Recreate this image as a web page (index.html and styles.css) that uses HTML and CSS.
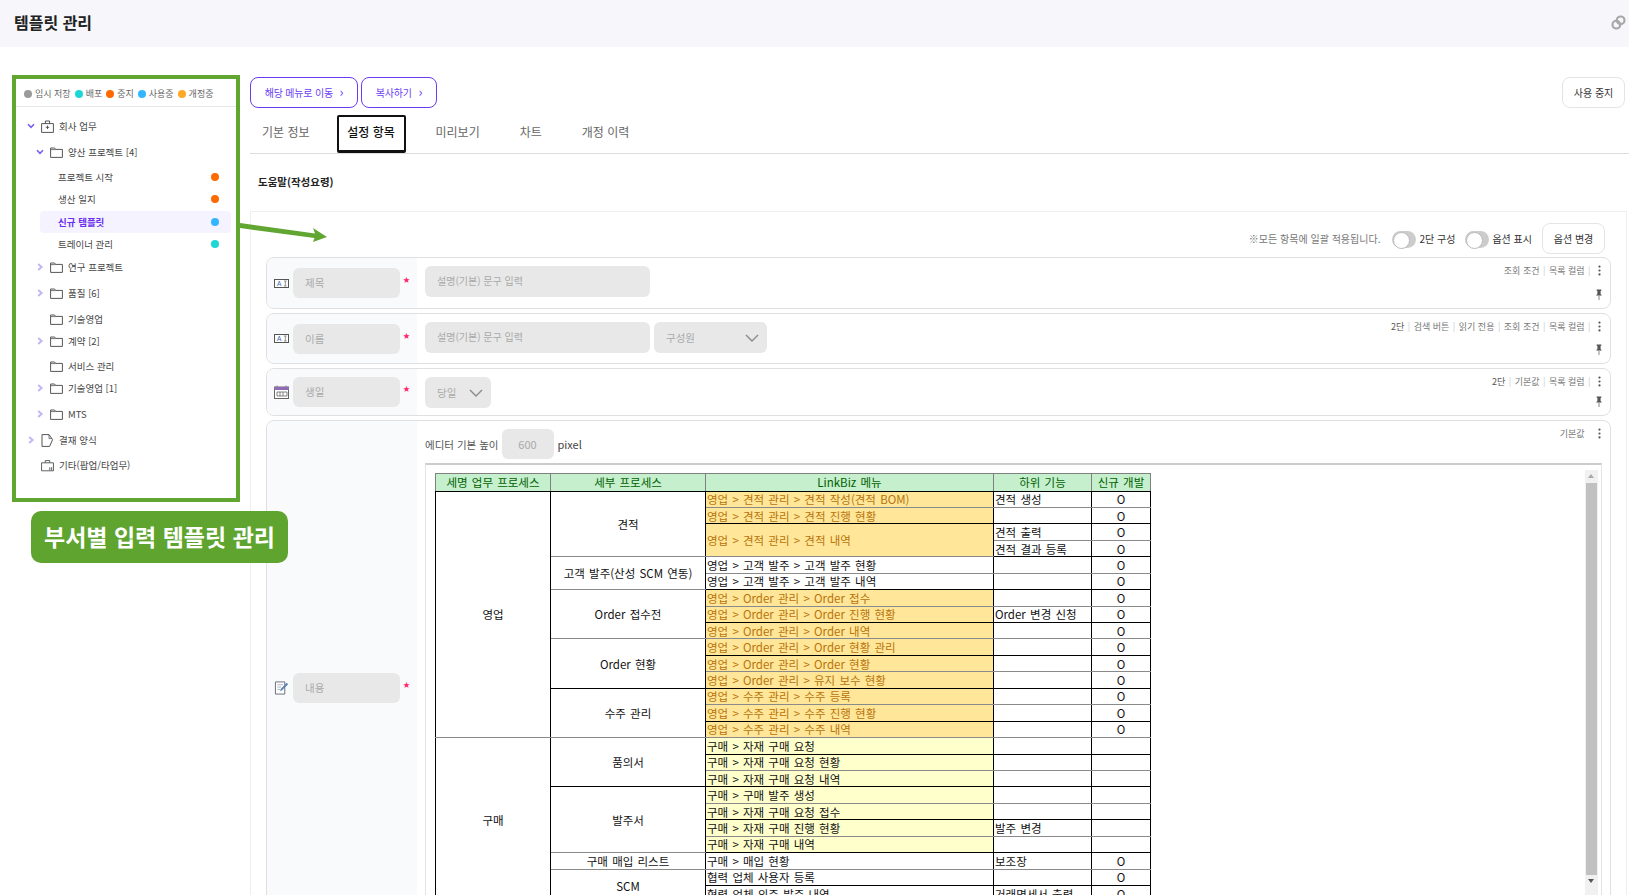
FILE: index.html
```html
<!DOCTYPE html>
<html lang="ko">
<head>
    <meta charset="UTF-8">
    <title>템플릿 관리</title>
    <link rel="stylesheet" href="styles.css">
</head>
<body>
    <!-- 아이콘 모음 -->
    <svg class="sprite" aria-hidden="true">
        <symbol id="i-open" viewBox="0 0 8 8"><path d="M1 2.2 4 5.4 7 2.2" fill="none" stroke="#7c5cf0" stroke-width="1.6"/></symbol>
        <symbol id="i-closed" viewBox="0 0 8 8"><path d="M2.2 1 5.6 4 2.2 7" fill="none" stroke="#c4b5f5" stroke-width="2"/></symbol>
        <symbol id="i-folder" viewBox="0 0 13 11"><path d="M.6 10.4V1h4l1 1.4h6.8v8z" fill="none" stroke="#555" stroke-width="1"/><path d="M.6 2.6h5" stroke="#555" stroke-width=".8"/></symbol>
        <symbol id="i-case" viewBox="0 0 13 13"><path d="M.6 3.6h11.8v8.8H.6zM4.4 3.6V1h4.2v2.6" fill="none" stroke="#555" stroke-width="1"/><path d="M6.5 5.6v3.4M4.8 7.3h3.4" stroke="#555" stroke-width="1"/></symbol>
        <symbol id="i-doc" viewBox="0 0 13 13"><path d="M1 12.4V.6h7l3.6 5-3 6.8z" fill="none" stroke="#555" stroke-width="1"/><path d="M8 .6v4h3" fill="none" stroke="#555" stroke-width=".8"/></symbol>
        <symbol id="i-etc" viewBox="0 0 14 13"><path d="M.6 3.6h12.8v8.6H.6zM4.6 3.6V1.2h4.8v2.4" fill="none" stroke="#555" stroke-width="1"/><path d="M9 8.5h1v3H9zM11 8.5h1v3h-1z" fill="#555"/></symbol>
        <symbol id="i-card" viewBox="0 0 15 9"><rect x=".5" y=".5" width="14" height="8" fill="#fff" stroke="#555"/><text x="3" y="7" font-size="6.5" font-family="Liberation Sans" fill="#3d5fa8">A</text><path d="M10 2h2.6M11.3 2v5M10 7h2.6" stroke="#777" stroke-width=".8"/></symbol>
        <symbol id="i-cal" viewBox="0 0 15 14"><rect x=".5" y="2" width="14" height="11.5" fill="#fff" stroke="#666"/><path d="M0 2h15v3H0z" fill="#8e6bb5"/><path d="M3 .5v2M12 .5v2" stroke="#8e6bb5"/><path d="M3 7h10v4H3zM6 7v4M9 7v4" fill="none" stroke="#666" stroke-width=".8"/></symbol>
        <symbol id="i-note" viewBox="0 0 15 15"><path d="M1 1h10v13H1z" fill="#fff" stroke="#667"/><path d="M3 4h6M3 6.5h4M3 9h3" stroke="#99a" stroke-width=".8"/><path d="M6 11l.6-2.4L13 2l1.6 1.6L8.2 10z" fill="#5b83b5"/></symbol>
        <symbol id="i-pin" viewBox="0 0 8 11"><path d="M1.6 .5h4.8v1L5.6 2v3l1.4 1.6H1L2.4 5V2L1.6 1.5z" fill="#555"/><path d="M4 6.6V11" stroke="#888"/></symbol>
        <symbol id="i-more" viewBox="0 0 3 11"><circle cx="1.5" cy="1.6" r="1.1" fill="#555"/><circle cx="1.5" cy="5.5" r="1.1" fill="#555"/><circle cx="1.5" cy="9.4" r="1.1" fill="#555"/></symbol>
        <symbol id="i-down" viewBox="0 0 14 8"><path d="M1 1l6 6 6-6" fill="none" stroke="#8a8a8a" stroke-width="1.4"/></symbol>
    </svg>

    <header class="top-bar">
        <h1>템플릿 관리</h1>
        <svg class="link-icon" viewBox="0 0 14 14"><g fill="none" stroke="#a8a8a8" stroke-width="2"><circle cx="5" cy="9" r="3.6"/><circle cx="9" cy="5" r="3.6"/></g></svg>
    </header>

    <div class="page-body">
        <!-- 왼쪽 트리 -->
        <aside class="side">
            <div class="legend">
                <span class="legend-item"><i class="dot gray"></i>임시 저장</span>
                <span class="legend-item"><i class="dot teal"></i>배포</span>
                <span class="legend-item"><i class="dot orange"></i>중지</span>
                <span class="legend-item"><i class="dot blue"></i>사용중</span>
                <span class="legend-item"><i class="dot amber"></i>개정중</span>
            </div>
            <ul class="tree">
                <li class="tree-row"><svg class="chev"><use href="#i-open"/></svg><svg class="ico"><use href="#i-case"/></svg>회사 업무</li>
                <li class="tree-row depth1 gap4"><svg class="chev"><use href="#i-open"/></svg><svg class="ico"><use href="#i-folder"/></svg>양산 프로젝트 [4]</li>
                <li class="tree-leaf gap3">프로젝트 시작<i class="dot orange"></i></li>
                <li class="tree-leaf">생산 일지<i class="dot orange"></i></li>
                <li class="tree-leaf active gap1">신규 템플릿<i class="dot blue"></i></li>
                <li class="tree-leaf">트레이너 관리<i class="dot teal"></i></li>
                <li class="tree-row depth1 gap1"><svg class="chev"><use href="#i-closed"/></svg><svg class="ico"><use href="#i-folder"/></svg>연구 프로젝트</li>
                <li class="tree-row depth1 gap4"><svg class="chev"><use href="#i-closed"/></svg><svg class="ico"><use href="#i-folder"/></svg>품질 [6]</li>
                <li class="tree-row depth1 gap4"><span class="chev"></span><svg class="ico"><use href="#i-folder"/></svg>기술영업</li>
                <li class="tree-row depth1"><svg class="chev"><use href="#i-closed"/></svg><svg class="ico"><use href="#i-folder"/></svg>계약 [2]</li>
                <li class="tree-row depth1 gap3"><span class="chev"></span><svg class="ico"><use href="#i-folder"/></svg>서비스 관리</li>
                <li class="tree-row depth1"><svg class="chev"><use href="#i-closed"/></svg><svg class="ico"><use href="#i-folder"/></svg>기술영업 [1]</li>
                <li class="tree-row depth1 gap4"><svg class="chev"><use href="#i-closed"/></svg><svg class="ico"><use href="#i-folder"/></svg>MTS</li>
                <li class="tree-row gap4"><svg class="chev"><use href="#i-closed"/></svg><svg class="ico"><use href="#i-doc"/></svg>결재 양식</li>
                <li class="tree-row gap3"><span class="chev"></span><svg class="ico"><use href="#i-etc"/></svg>기타(팝업/타업무)</li>
            </ul>
        </aside>

        <main class="main">
            <div class="actions">
                <div class="actions-left">
                    <button class="btn-link wide">해당 메뉴로 이동 <span class="gt">›</span></button>
                    <button class="btn-link">복사하기 <span class="gt">›</span></button>
                </div>
                <button class="btn-plain">사용 중지</button>
            </div>

            <nav class="tabs">
                <a class="tab t1">기본 정보</a>
                <a class="tab on">설정 항목</a>
                <a class="tab t3">미리보기</a>
                <a class="tab t4">차트</a>
                <a class="tab t5">개정 이력</a>
            </nav>

            <h2 class="sub-title">도움말(작성요령)</h2>

            <section class="panel">
                <div class="options">
                    <span class="notice">※모든 항목에 일괄 적용됩니다.</span>
                    <span class="toggle"></span><span class="toggle-text">2단 구성</span>
                    <span class="toggle"></span><span class="toggle-text">옵션 표시</span>
                    <button class="btn-plain">옵션 변경</button>
                </div>

                <div class="field h52">
                    <div class="field-left">
                        <svg class="field-ico short"><use href="#i-card"/></svg>
                        <span class="label-box">제목</span><span class="star">★</span>
                    </div>
                    <div class="field-body"><span class="input-box desc">설명(기본) 문구 입력</span></div>
                    <div class="field-meta">
                        <div class="meta-top"><span>조회 조건</span><b>|</b><span>목록 컬럼</span><b>|</b><svg class="more"><use href="#i-more"/></svg></div>
                        <svg class="pin"><use href="#i-pin"/></svg>
                    </div>
                </div>

                <div class="field h51">
                    <div class="field-left">
                        <svg class="field-ico short"><use href="#i-card"/></svg>
                        <span class="label-box">이름</span><span class="star">★</span>
                    </div>
                    <div class="field-body">
                        <span class="input-box desc">설명(기본) 문구 입력</span>
                        <span class="input-box select wide">구성원<svg class="down"><use href="#i-down"/></svg></span>
                    </div>
                    <div class="field-meta">
                        <div class="meta-top"><span class="dark">2단</span><b>|</b><span>검색 버튼</span><b>|</b><span>읽기 전용</span><b>|</b><span>조회 조건</span><b>|</b><span>목록 컬럼</span><b>|</b><svg class="more"><use href="#i-more"/></svg></div>
                        <svg class="pin"><use href="#i-pin"/></svg>
                    </div>
                </div>

                <div class="field h48">
                    <div class="field-left">
                        <svg class="field-ico"><use href="#i-cal"/></svg>
                        <span class="label-box">생일</span><span class="star">★</span>
                    </div>
                    <div class="field-body"><span class="input-box select">당일<svg class="down"><use href="#i-down"/></svg></span></div>
                    <div class="field-meta">
                        <div class="meta-top"><span class="dark">2단</span><b>|</b><span>기본값</span><b>|</b><span>목록 컬럼</span><b>|</b><svg class="more"><use href="#i-more"/></svg></div>
                        <svg class="pin"><use href="#i-pin"/></svg>
                    </div>
                </div>

                <div class="field h536">
                    <div class="field-left">
                        <svg class="field-ico"><use href="#i-note"/></svg>
                        <span class="label-box">내용</span><span class="star">★</span>
                    </div>
                    <div class="field-body column">
                        <div class="editor-height">
                            <span>에디터 기본 높이</span>
                            <span class="input-box num">600</span>
                            <span class="px">pixel</span>
                        </div>
                        <div class="editor">
                            <div class="editor-scroll">
                                <table class="sheet">
                                    <colgroup><col class="c1"><col class="c2"><col class="c3"><col class="c4"><col class="c5"></colgroup>
                                    <thead>
                                        <tr><th>세명 업무 프로세스</th><th>세부 프로세스</th><th>LinkBiz 메뉴</th><th>하위 기능</th><th>신규 개발</th></tr>
                                    </thead>
                                    <tbody>
                                        <tr><td class="mid" rowspan="15">영업</td><td class="mid" rowspan="4">견적</td><td class="sale">영업 &gt; 견적 관리 &gt; 견적 작성(견적 BOM)</td><td>견적 생성</td><td class="mid">O</td></tr>
                                        <tr><td class="sale">영업 &gt; 견적 관리 &gt; 견적 진행 현황</td><td></td><td class="mid">O</td></tr>
                                        <tr><td class="sale" rowspan="2">영업 &gt; 견적 관리 &gt; 견적 내역</td><td>견적 출력</td><td class="mid">O</td></tr>
                                        <tr><td>견적 결과 등록</td><td class="mid">O</td></tr>
                                        <tr><td class="mid" rowspan="2">고객 발주(산성 SCM 연동)</td><td>영업 &gt; 고객 발주 &gt; 고객 발주 현황</td><td></td><td class="mid">O</td></tr>
                                        <tr><td>영업 &gt; 고객 발주 &gt; 고객 발주 내역</td><td></td><td class="mid">O</td></tr>
                                        <tr><td class="mid" rowspan="3">Order 접수전</td><td class="sale">영업 &gt; Order 관리 &gt; Order 접수</td><td></td><td class="mid">O</td></tr>
                                        <tr><td class="sale">영업 &gt; Order 관리 &gt; Order 진행 현황</td><td>Order 변경 신청</td><td class="mid">O</td></tr>
                                        <tr><td class="sale">영업 &gt; Order 관리 &gt; Order 내역</td><td></td><td class="mid">O</td></tr>
                                        <tr><td class="mid" rowspan="3">Order 현황</td><td class="sale">영업 &gt; Order 관리 &gt; Order 현황 관리</td><td></td><td class="mid">O</td></tr>
                                        <tr><td class="sale">영업 &gt; Order 관리 &gt; Order 현황</td><td></td><td class="mid">O</td></tr>
                                        <tr><td class="sale">영업 &gt; Order 관리 &gt; 유지 보수 현황</td><td></td><td class="mid">O</td></tr>
                                        <tr><td class="mid" rowspan="3">수주 관리</td><td class="sale">영업 &gt; 수주 관리 &gt; 수주 등록</td><td></td><td class="mid">O</td></tr>
                                        <tr><td class="sale">영업 &gt; 수주 관리 &gt; 수주 진행 현황</td><td></td><td class="mid">O</td></tr>
                                        <tr><td class="sale">영업 &gt; 수주 관리 &gt; 수주 내역</td><td></td><td class="mid">O</td></tr>
                                        <tr><td class="mid" rowspan="10">구매</td><td class="mid" rowspan="3">품의서</td><td class="buy">구매 &gt; 자재 구매 요청</td><td></td><td></td></tr>
                                        <tr><td class="buy">구매 &gt; 자재 구매 요청 현황</td><td></td><td></td></tr>
                                        <tr><td class="buy">구매 &gt; 자재 구매 요청 내역</td><td></td><td></td></tr>
                                        <tr><td class="mid" rowspan="4">발주서</td><td class="buy">구매 &gt; 구매 발주 생성</td><td></td><td></td></tr>
                                        <tr><td class="buy">구매 &gt; 자재 구매 요청 접수</td><td></td><td></td></tr>
                                        <tr><td class="buy">구매 &gt; 자재 구매 진행 현황</td><td>발주 변경</td><td></td></tr>
                                        <tr><td class="buy">구매 &gt; 자재 구매 내역</td><td></td><td></td></tr>
                                        <tr><td class="mid">구매 매입 리스트</td><td>구매 &gt; 매입 현황</td><td>보조장</td><td class="mid">O</td></tr>
                                        <tr><td class="mid" rowspan="2">SCM</td><td>협력 업체 사용자 등록</td><td></td><td class="mid">O</td></tr>
                                        <tr><td>협력 업체 외주 발주 내역</td><td>거래명세서 출력</td><td class="mid">O</td></tr>
                                    </tbody>
                                </table>
                            </div>
                            <div class="scrollbar">
                                <span class="arrow up"></span>
                                <span class="thumb"></span>
                                <span class="arrow dn"></span>
                            </div>
                        </div>
                    </div>
                    <div class="field-meta">
                        <div class="meta-top"><span>기본값</span><b class="blank">|</b><svg class="more"><use href="#i-more"/></svg></div>
                    </div>
                </div>
            </section>
        </main>
    </div>

    <!-- 설명용 표시 -->
    <svg class="callout-arrow" viewBox="0 0 90 24"><path d="M0 2 75 12.5 73 7 87 16 73 21 74.5 17 0 7z" fill="#62a632"/></svg>
    <div class="callout">부서별 입력 템플릿 관리</div>
</body>
</html>
```

FILE: styles.css
```css
* {
    margin: 0;
    padding: 0;
    box-sizing: border-box;
}

html, body {
    height: 100%;
    overflow: hidden;
}

body {
    font-family: "Noto Sans CJK KR", "Noto Sans", sans-serif;
    font-size: 10px;
    color: #444;
    background: #fff;
    display: flex;
    flex-direction: column;
    position: relative;
}

.sprite {
    display: none;
}

/* 상단 */
.top-bar {
    height: 47px;
    flex: none;
    background: #f6f6fb;
    display: flex;
    align-items: center;
    justify-content: space-between;
    padding: 0 3px 3px 14px;
}

.top-bar h1 {
    font-size: 16px;
    font-weight: 700;
    color: #222;
}

.link-icon {
    width: 15px;
    height: 15px;
}

.page-body {
    flex: 1;
    min-height: 0;
    display: flex;
}

/* 왼쪽 트리 */
.side {
    flex: none;
    width: 228px;
    height: 427px;
    margin: 28px 10px 0 12px;
    border: 4px solid #62a632;
    background: #fff;
}

.legend {
    height: 28px;
    border-bottom: 1px solid #e8e8e8;
    display: flex;
    align-items: center;
    gap: 4px;
    padding: 2px 0 0 8px;
    font-size: 9px;
    color: #666;
}

.legend-item {
    display: flex;
    align-items: center;
    gap: 3px;
}

.dot {
    display: block;
    width: 8px;
    height: 8px;
    border-radius: 50%;
    flex: none;
}

.gray { background: #9a9a9a; }
.teal { background: #1fd6d6; }
.orange { background: #ff6a00; }
.blue { background: #33b5ff; }
.amber { background: #ffa726; }

.tree {
    list-style: none;
    padding-top: 8px;
    font-size: 9.5px;
    color: #444;
}

.tree-row {
    height: 22px;
    display: flex;
    align-items: center;
    padding-left: 11px;
}

.tree-row.depth1 {
    padding-left: 20px;
}

.chev {
    display: block;
    flex: none;
    width: 8px;
    height: 8px;
    margin-right: 6px;
}

.ico {
    flex: none;
    width: 13px;
    height: 13px;
    margin-right: 5px;
}

.tree-leaf {
    height: 22px;
    margin: 0 5px 0 24px;
    padding: 0 12px 0 18px;
    display: flex;
    align-items: center;
    justify-content: space-between;
    border-radius: 4px;
}

.tree-leaf.active {
    background: #f5f3ff;
    color: #6b2ff0;
    font-weight: 700;
}

.gap1 { margin-top: 1px; }
.gap3 { margin-top: 3px; }
.gap4 { margin-top: 4px; }

/* 본문 */
.main {
    flex: 1;
    min-width: 0;
    display: flex;
    flex-direction: column;
}

.actions {
    flex: none;
    margin-top: 30px;
    padding-right: 4px;
    display: flex;
    justify-content: space-between;
}

.actions-left {
    display: flex;
    gap: 3px;
}

button {
    font-family: inherit;
    font-size: 10px;
    background: #fff;
    cursor: pointer;
}

.btn-link {
    width: 76px;
    height: 31px;
    border: 1px solid #6d3cf0;
    border-radius: 8px;
    color: #6b3df5;
    letter-spacing: -0.2px;
}

.btn-link.wide {
    width: 108px;
}

.gt {
    margin-left: 4px;
    font-size: 13px;
    line-height: 1;
}

.btn-plain {
    width: 63px;
    height: 31px;
    border: 1px solid #e4e4e4;
    border-radius: 8px;
    color: #333;
}

.tabs {
    flex: none;
    margin-top: 7px;
    height: 39px;
    border-bottom: 1px solid #ddd;
    display: flex;
    align-items: flex-start;
}

.tab {
    height: 38px;
    font-size: 12px;
    line-height: 34px;
    color: #666;
}

.tab.t1 { margin: 0 27px 0 12px; }
.tab.t3 { margin: 0 40px 0 30px; }
.tab.t4 { margin-right: 40px; }

.tab.on {
    width: 69px;
    text-align: center;
    border: 2px solid #111;
    border-bottom-width: 3px;
    border-radius: 2px;
    line-height: 30px;
    color: #111;
    font-weight: 500;
}

.sub-title {
    flex: none;
    height: 57px;
    padding-left: 8px;
    font-size: 10.5px;
    font-weight: 700;
    line-height: 56px;
    color: #222;
}

.panel {
    flex: 1;
    min-height: 0;
    margin-right: 2px;
    padding: 0 15px;
    border: 1px solid #eee;
    border-bottom: 0;
}

.options {
    height: 45px;
    padding: 11px 6px 0 0;
    display: flex;
    justify-content: flex-end;
    align-items: flex-start;
    line-height: 31px;
    font-size: 10.5px;
}

.notice {
    margin-right: 12px;
    font-size: 10px;
    color: #777;
}

.toggle {
    width: 24px;
    height: 17px;
    margin: 8px 3px 0 0;
    border-radius: 9px;
    background: #ccc;
    position: relative;
}

.toggle::after {
    content: "";
    position: absolute;
    left: 1px;
    top: 1px;
    width: 15px;
    height: 15px;
    border-radius: 50%;
    background: #fff;
    border: 1px solid #bbb;
}

.toggle-text {
    margin-right: 10px;
    font-size: 10px;
    color: #333;
}

/* 항목 */
.field {
    display: flex;
    border: 1px solid #e0e0e0;
    border-radius: 8px;
    margin-bottom: 4px;
    overflow: hidden;
}

.h52 { height: 52px; }
.h51 { height: 51px; }
.h48 { height: 48px; }
.h536 { height: 536px; }

.field-left {
    flex: none;
    width: 150px;
    background: #f9fafc;
    display: flex;
    align-items: center;
    padding-left: 7px;
}

.field-ico {
    flex: none;
    width: 15px;
    height: 14px;
    margin-right: 4px;
}

.field-ico.short {
    height: 9px;
}

.label-box {
    width: 107px;
    height: 30px;
    line-height: 30px;
    padding-left: 12px;
    flex: none;
    background: #e8e8e8;
    border-radius: 6px;
    font-size: 10.5px;
    color: #aaa;
}

.star {
    margin: -8px 0 0 3px;
    font-size: 7px;
    color: #ff1f6b;
}

.field-body {
    flex: 1;
    min-width: 0;
    display: flex;
    gap: 4px;
    padding: 8px 0 0 8px;
}

.field-body.column {
    flex-direction: column;
    gap: 4px;
    padding-right: 8px;
}

.input-box {
    height: 31px;
    line-height: 30px;
    background: #e8e8e8;
    border-radius: 6px;
    color: #aaa;
    font-size: 10px;
    padding-left: 12px;
}

.desc {
    width: 225px;
}

.select {
    width: 66px;
    font-size: 10.5px;
    display: flex;
    align-items: center;
    justify-content: space-between;
    padding-right: 8px;
}

.select.wide {
    width: 113px;
}

.down {
    width: 14px;
    height: 8px;
}

.field-meta {
    flex: none;
    width: 280px;
    margin-left: -280px;
    padding: 5px 9px 8px 0;
    display: flex;
    flex-direction: column;
    align-items: flex-end;
    justify-content: space-between;
    font-size: 9px;
    color: #777;
}

.h536 .field-body {
    padding-right: 8px;
}

.meta-top {
    display: flex;
    align-items: center;
    gap: 3.5px;
    height: 14px;
}

.meta-top .dark {
    color: #555;
}

.meta-top b {
    font-weight: 400;
    color: #ccc;
}

.meta-top b.blank {
    visibility: hidden;
}

.more {
    width: 3px;
    height: 11px;
    margin-left: 4px;
}

.pin {
    width: 8px;
    height: 11px;
    margin-right: -2px;
}

.editor-height {
    display: flex;
    align-items: center;
    gap: 3px;
    font-size: 10.5px;
    color: #555;
}

.num {
    width: 52px;
    height: 30px;
    text-align: center;
    padding-left: 0;
    font-size: 11px;
}

.px {
    margin-left: 1px;
    font-size: 11px;
    color: #444;
}

/* 에디터 */
.editor {
    height: 439px;
    flex: none;
    margin-right: 0;
    border: 1px solid #e4e4e4;
    border-top: 2px solid #ccc;
    padding: 5px 3px 0 9px;
    display: flex;
    justify-content: space-between;
    background: #fff;
}

.editor-scroll {
    flex: 1;
    min-width: 0;
    padding-top: 3px;
}

.sheet {
    width: 715px;
    table-layout: fixed;
    border-collapse: collapse;
    font-size: 11.5px;
    word-spacing: 1px;
    line-height: 14px;
    color: #111;
}

.c1 { width: 115px; }
.c2 { width: 155px; }
.c3 { width: 288px; }
.c4 { width: 98px; }
.c5 { width: 59px; }

.sheet th {
    height: 17.5px;
    background: #c6efce;
    color: #006100;
    font-weight: 400;
    border: 1px solid #808080;
    border-bottom-color: #000;
    padding: 0;
}

.sheet td {
    height: 16.45px;
    padding: 0 1px;
    border: 1px solid #000;
    white-space: nowrap;
    overflow: hidden;
}

.sheet tbody tr:nth-child(odd) td {
    border-bottom-color: #8a8a8a;
}

.sheet td.mid {
    text-align: center;
}

.sheet td.sale {
    background: #ffe699;
    color: #b8740a;
}

.sheet td.buy {
    background: #ffffcc;
}

.scrollbar {
    flex: none;
    width: 13px;
    display: flex;
    flex-direction: column;
    background: #f1f1f1;
}

.arrow {
    flex: none;
    height: 13px;
    position: relative;
}

.arrow::after {
    content: "";
    position: absolute;
    left: 3px;
    top: 4px;
    border: 3.5px solid transparent;
    border-top: 0;
    border-bottom: 4px solid #a8a8a8;
}

.arrow.dn::after {
    border-bottom: 0;
    border-top: 4px solid #555;
}

.thumb {
    height: 392px;
    margin: 0 1px 0 1px;
    background: #c1c1c1;
}

/* 설명용 표시 */
.callout-arrow {
    position: absolute;
    left: 240px;
    top: 221px;
    width: 90px;
    height: 24px;
}

.callout {
    position: absolute;
    left: 31px;
    top: 511px;
    width: 257px;
    height: 52px;
    line-height: 50px;
    text-align: center;
    background: #5fa42f;
    border-radius: 10px;
    color: #fff;
    font-size: 23px;
    font-weight: 700;
}
```
